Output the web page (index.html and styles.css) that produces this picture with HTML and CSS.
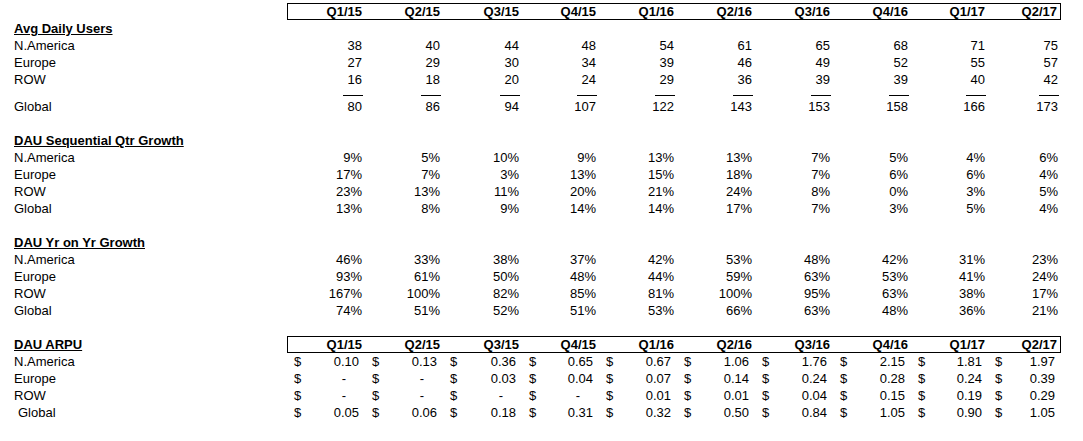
FILE: index.html
```html
<!DOCTYPE html>
<html>
<head>
<meta charset="utf-8">
<link rel="stylesheet" href="styles.css">
</head>
<body>
<div class="sheet">
  <section class="block">
    <div class="row head">
      <div class="lbl"></div>
      <div class="qbox">
        <div>Q1/15</div><div>Q2/15</div><div>Q3/15</div><div>Q4/15</div><div>Q1/16</div><div>Q2/16</div><div>Q3/16</div><div>Q4/16</div><div>Q1/17</div><div>Q2/17</div>
      </div>
    </div>
    <div class="row"><div class="lbl title">Avg Daily Users</div></div>
    <div class="row"><div class="lbl">N.America</div><div class="n">38</div><div class="n">40</div><div class="n">44</div><div class="n">48</div><div class="n">54</div><div class="n">61</div><div class="n">65</div><div class="n">68</div><div class="n">71</div><div class="n">75</div></div>
    <div class="row"><div class="lbl">Europe</div><div class="n">27</div><div class="n">29</div><div class="n">30</div><div class="n">34</div><div class="n">39</div><div class="n">46</div><div class="n">49</div><div class="n">52</div><div class="n">55</div><div class="n">57</div></div>
    <div class="row"><div class="lbl">ROW</div><div class="n">16</div><div class="n">18</div><div class="n">20</div><div class="n">24</div><div class="n">29</div><div class="n">36</div><div class="n">39</div><div class="n">39</div><div class="n">40</div><div class="n">42</div></div>
    <div class="row rule"><div class="lbl"></div><div class="u"><i></i></div><div class="u"><i></i></div><div class="u"><i></i></div><div class="u"><i></i></div><div class="u"><i></i></div><div class="u"><i></i></div><div class="u"><i></i></div><div class="u"><i></i></div><div class="u"><i></i></div><div class="u"><i></i></div></div>
    <div class="row"><div class="lbl">Global</div><div class="n">80</div><div class="n">86</div><div class="n">94</div><div class="n">107</div><div class="n">122</div><div class="n">143</div><div class="n">153</div><div class="n">158</div><div class="n">166</div><div class="n">173</div></div>
  </section>

  <section class="block">
    <div class="row"><div class="lbl title">DAU Sequential Qtr Growth</div></div>
    <div class="row"><div class="lbl">N.America</div><div class="n">9%</div><div class="n">5%</div><div class="n">10%</div><div class="n">9%</div><div class="n">13%</div><div class="n">13%</div><div class="n">7%</div><div class="n">5%</div><div class="n">4%</div><div class="n">6%</div></div>
    <div class="row"><div class="lbl">Europe</div><div class="n">17%</div><div class="n">7%</div><div class="n">3%</div><div class="n">13%</div><div class="n">15%</div><div class="n">18%</div><div class="n">7%</div><div class="n">6%</div><div class="n">6%</div><div class="n">4%</div></div>
    <div class="row"><div class="lbl">ROW</div><div class="n">23%</div><div class="n">13%</div><div class="n">11%</div><div class="n">20%</div><div class="n">21%</div><div class="n">24%</div><div class="n">8%</div><div class="n">0%</div><div class="n">3%</div><div class="n">5%</div></div>
    <div class="row"><div class="lbl">Global</div><div class="n">13%</div><div class="n">8%</div><div class="n">9%</div><div class="n">14%</div><div class="n">14%</div><div class="n">17%</div><div class="n">7%</div><div class="n">3%</div><div class="n">5%</div><div class="n">4%</div></div>
  </section>

  <section class="block">
    <div class="row"><div class="lbl title">DAU Yr on Yr Growth</div></div>
    <div class="row"><div class="lbl">N.America</div><div class="n">46%</div><div class="n">33%</div><div class="n">38%</div><div class="n">37%</div><div class="n">42%</div><div class="n">53%</div><div class="n">48%</div><div class="n">42%</div><div class="n">31%</div><div class="n">23%</div></div>
    <div class="row"><div class="lbl">Europe</div><div class="n">93%</div><div class="n">61%</div><div class="n">50%</div><div class="n">48%</div><div class="n">44%</div><div class="n">59%</div><div class="n">63%</div><div class="n">53%</div><div class="n">41%</div><div class="n">24%</div></div>
    <div class="row"><div class="lbl">ROW</div><div class="n">167%</div><div class="n">100%</div><div class="n">82%</div><div class="n">85%</div><div class="n">81%</div><div class="n">100%</div><div class="n">95%</div><div class="n">63%</div><div class="n">38%</div><div class="n">17%</div></div>
    <div class="row"><div class="lbl">Global</div><div class="n">74%</div><div class="n">51%</div><div class="n">52%</div><div class="n">51%</div><div class="n">53%</div><div class="n">66%</div><div class="n">63%</div><div class="n">48%</div><div class="n">36%</div><div class="n">21%</div></div>
  </section>

  <section class="block">
    <div class="row head">
      <div class="lbl title">DAU ARPU</div>
      <div class="qbox">
        <div>Q1/15</div><div>Q2/15</div><div>Q3/15</div><div>Q4/15</div><div>Q1/16</div><div>Q2/16</div><div>Q3/16</div><div>Q4/16</div><div>Q1/17</div><div>Q2/17</div>
      </div>
    </div>
    <div class="row"><div class="lbl">N.America</div><div class="d"><span>$</span><span>0.10</span></div><div class="d"><span>$</span><span>0.13</span></div><div class="d"><span>$</span><span>0.36</span></div><div class="d"><span>$</span><span>0.65</span></div><div class="d"><span>$</span><span>0.67</span></div><div class="d"><span>$</span><span>1.06</span></div><div class="d"><span>$</span><span>1.76</span></div><div class="d"><span>$</span><span>2.15</span></div><div class="d"><span>$</span><span>1.81</span></div><div class="d"><span>$</span><span>1.97</span></div></div>
    <div class="row"><div class="lbl">Europe</div><div class="d"><span>$</span><span class="dash">-</span></div><div class="d"><span>$</span><span class="dash">-</span></div><div class="d"><span>$</span><span>0.03</span></div><div class="d"><span>$</span><span>0.04</span></div><div class="d"><span>$</span><span>0.07</span></div><div class="d"><span>$</span><span>0.14</span></div><div class="d"><span>$</span><span>0.24</span></div><div class="d"><span>$</span><span>0.28</span></div><div class="d"><span>$</span><span>0.24</span></div><div class="d"><span>$</span><span>0.39</span></div></div>
    <div class="row"><div class="lbl">ROW</div><div class="d"><span>$</span><span class="dash">-</span></div><div class="d"><span>$</span><span class="dash">-</span></div><div class="d"><span>$</span><span class="dash">-</span></div><div class="d"><span>$</span><span class="dash">-</span></div><div class="d"><span>$</span><span>0.01</span></div><div class="d"><span>$</span><span>0.01</span></div><div class="d"><span>$</span><span>0.04</span></div><div class="d"><span>$</span><span>0.15</span></div><div class="d"><span>$</span><span>0.19</span></div><div class="d"><span>$</span><span>0.29</span></div></div>
    <div class="row"><div class="lbl indent">Global</div><div class="d"><span>$</span><span>0.05</span></div><div class="d"><span>$</span><span>0.06</span></div><div class="d"><span>$</span><span>0.18</span></div><div class="d"><span>$</span><span>0.31</span></div><div class="d"><span>$</span><span>0.32</span></div><div class="d"><span>$</span><span>0.50</span></div><div class="d"><span>$</span><span>0.84</span></div><div class="d"><span>$</span><span>1.05</span></div><div class="d"><span>$</span><span>0.90</span></div><div class="d"><span>$</span><span>1.05</span></div></div>
  </section>
</div>
</body>
</html>
```

FILE: styles.css
```css
html, body {
  margin: 0;
  padding: 0;
  background: #ffffff;
}

body {
  font-family: "Liberation Sans", Arial, sans-serif;
  font-size: 13px;
  color: #000000;
}

.sheet {
  padding-top: 3px;
  width: 1083px;
}

.block + .block {
  margin-top: 17px;
}

.row {
  display: grid;
  grid-template-columns: 287px 78px 78px 79px 77px 78px 78px 78px 78px 77px 73px;
  height: 17px;
  line-height: 17px;
  white-space: nowrap;
}

.lbl {
  padding-left: 14px;
}

.lbl.indent {
  padding-left: 18px;
}

.title {
  font-weight: bold;
  text-decoration: underline;
}

.qbox {
  grid-column: 2 / -1;
  box-sizing: border-box;
  height: 17px;
  border: 1px solid #000000;
  display: grid;
  grid-template-columns: 77px 78px 79px 77px 78px 78px 78px 78px 77px 72px;
  line-height: 15px;
  font-weight: bold;
}

.qbox > div {
  text-align: right;
  padding-right: 3px;
}

.n {
  text-align: right;
  padding-right: 3px;
}

.row.rule {
  height: 10px;
}

.u {
  display: flex;
  justify-content: flex-end;
  align-items: flex-start;
  padding-right: 2px;
  padding-top: 7px;
}

.u i {
  display: block;
  width: 20px;
  height: 1px;
  background: #000000;
}

.d {
  display: flex;
  justify-content: space-between;
  padding-left: 7px;
  padding-right: 6px;
}

.dash {
  padding-right: 13px;
}
```
